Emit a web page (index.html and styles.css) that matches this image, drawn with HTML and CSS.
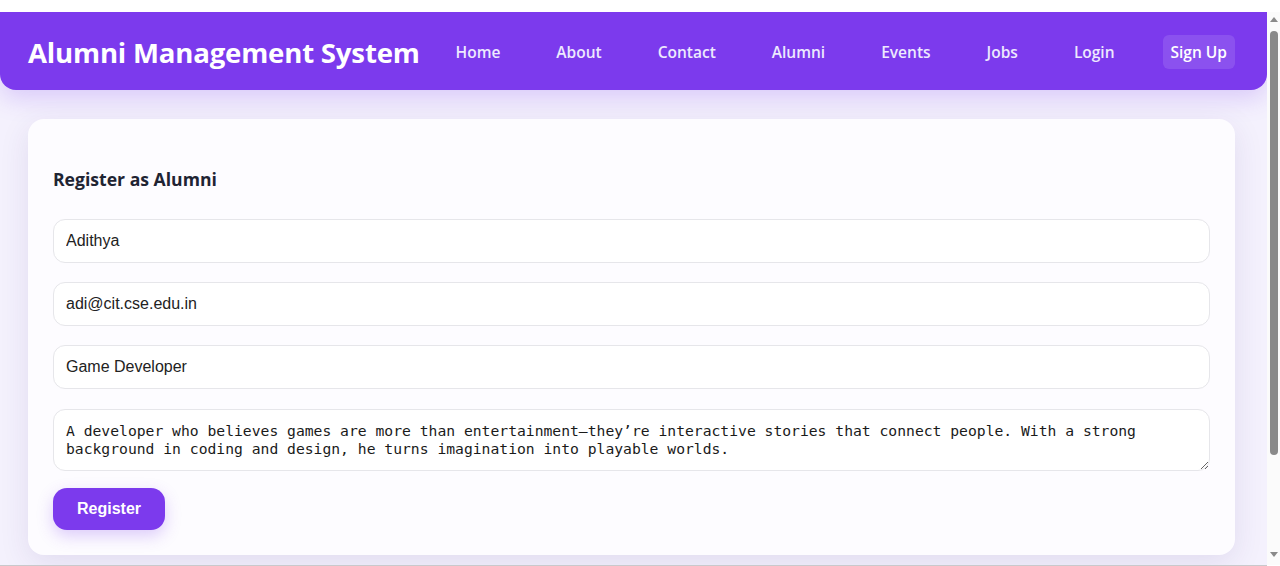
FILE: index.html
```html
<!DOCTYPE html>
<html lang="en">
<head>
<meta charset="utf-8">
<title>Alumni Management System</title>
<link rel="stylesheet" href="styles.css">
</head>
<body>
<header class="topbar">
  <h1 class="brand">Alumni Management System</h1>
  <nav class="nav">
    <a class="nav-link" href="#">Home</a>
    <a class="nav-link" href="#">About</a>
    <a class="nav-link" href="#">Contact</a>
    <a class="nav-link" href="#">Alumni</a>
    <a class="nav-link" href="#">Events</a>
    <a class="nav-link" href="#">Jobs</a>
    <a class="nav-link" href="#">Login</a>
    <a class="nav-link nav-active" href="#">Sign Up</a>
  </nav>
</header>
<main class="page">
  <section class="card">
    <h3 class="card-title">Register as Alumni</h3>
    <form class="form">
      <input class="field" type="text" value="Adithya">
      <input class="field" type="email" value="adi@cit.cse.edu.in">
      <input class="field" type="text" value="Game Developer">
      <textarea class="field area" rows="2">A developer who believes games are more than entertainment—they’re interactive stories that connect people. With a strong background in coding and design, he turns imagination into playable worlds.</textarea>
      <div class="actions"><button class="btn" type="button">Register</button></div>
    </form>
  </section>
</main>
<div class="scrollbar" aria-hidden="true">
  <span class="sb-arrow sb-up"></span>
  <span class="sb-thumb"></span>
  <span class="sb-arrow sb-down"></span>
</div>
</body>
</html>
```

FILE: styles.css
```css
html {
  background: #ffffff;
}
body {
  margin: 12px 13px 0 0;
  background: #f4f1fd;
  font-family: "Open Sans", "Noto Sans", sans-serif;
  height: 553px;
  overflow: hidden;
  border-bottom: 1px solid #c9c9cc;
}
.topbar {
  height: 78px;
  box-sizing: border-box;
  background: #7c3aed;
  border-radius: 0 0 16px 16px;
  display: flex;
  align-items: center;
  justify-content: space-between;
  padding: 0 32px 0 28px;
  box-shadow: 0 8px 24px rgba(124, 58, 237, 0.22);
}
.brand {
  margin: 0;
  color: #ffffff;
  font-size: 27.6px;
  font-weight: 700;
  letter-spacing: -0.2px;
  position: relative;
  top: 1px;
}
.nav {
  display: flex;
  gap: 40px;
  align-items: center;
  padding-top: 2px;
}
.nav-link {
  color: #ede9fe;
  text-decoration: none;
  font-size: 15.5px;
  font-weight: 600;
  padding: 8px 8px;
  border-radius: 6px;
  line-height: 18px;
}
.nav-active {
  background: rgba(255, 255, 255, 0.12);
  color: #ffffff;
}
.page {
  padding: 29px 32px 0 28px;
}
.card {
  background: #fdfcff;
  border-radius: 16px;
  padding: 25px;
  box-shadow: 0 8px 30px rgba(60, 40, 120, 0.1);
}
.card-title {
  margin: 22px 0 27px;
  font-size: 17.6px;
  font-weight: 700;
  color: #1f2433;
  line-height: 26px;
}
.form {
  display: flex;
  flex-direction: column;
  gap: 19px;
}
.field {
  display: block;
  width: 100%;
  box-sizing: border-box;
  height: 44px;
  border: 1px solid #e6e6ea;
  border-radius: 12px;
  padding: 0 12px;
  font-family: "Liberation Sans", Arial, sans-serif;
  font-size: 16px;
  color: #222222;
  background: #ffffff;
  outline: none;
}
.area {
  margin-top: 1px;
  height: 62px;
  padding: 12px 12px;
  font-family: "DejaVu Sans Mono", monospace;
  font-size: 14.7px;
  line-height: 18px;
  color: #1a1a1a;
  resize: vertical;
}
.actions {
  margin-top: -2px;
}
.btn {
  background: #7c3aed;
  color: #ffffff;
  border: none;
  border-radius: 14px;
  height: 42px;
  padding: 0 24px;
  font-family: "Liberation Sans", Arial, sans-serif;
  font-size: 16px;
  font-weight: 700;
  box-shadow: 0 6px 16px rgba(124, 58, 237, 0.25);
}
.scrollbar {
  position: fixed;
  top: 12px;
  right: 0;
  width: 13px;
  height: 553px;
  background: #fbfbfb;
  display: flex;
  flex-direction: column;
  align-items: center;
}
.sb-arrow {
  width: 0;
  height: 0;
  border-left: 4px solid transparent;
  border-right: 4px solid transparent;
}
.sb-up {
  margin-top: 5px;
  border-bottom: 5px solid #8a8a8a;
}
.sb-thumb {
  margin-top: 9px;
  width: 8px;
  height: 424px;
  background: #8a8a8a;
  border-radius: 4px;
}
.sb-down {
  margin-top: auto;
  margin-bottom: 8px;
  border-top: 5px solid #8a8a8a;
}
```
